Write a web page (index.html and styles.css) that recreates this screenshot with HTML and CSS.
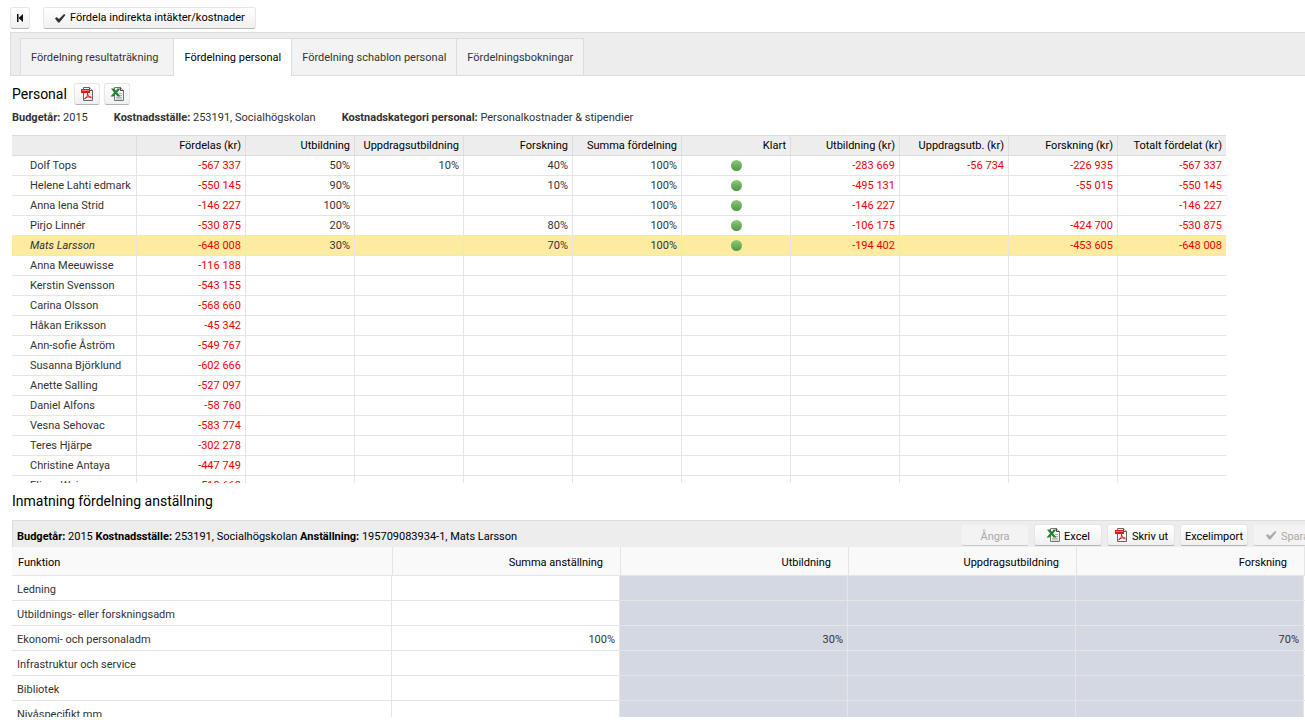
FILE: index.html
```
<!DOCTYPE html>
<html lang="sv">
<head>
<meta charset="utf-8">
<title>Fördelning personal</title>
<link rel="stylesheet" href="styles.css">
</head>
<body>
<svg class="defs" aria-hidden="true">
  <symbol id="pdf" viewBox="0 0 14 14">
    <path d="M3.500.5h6l3 3v10h-9z" fill="#f6f6f6" stroke="#666"/>
    <path d="M9.500.5v3h3" fill="#ddd" stroke="#555"/>
    <path d="M1 2h9v4H1z" fill="#e81515"/>
    <path d="M2 3.500h7" stroke="#f77" fill="none"/>
    <path d="M4.500 12c2-1 3.300-3 3-6M7.500 6.500c.5 2.500 2 4 4 4.500M4.500 11.500c2-1.500 4-2 7-1.500" stroke="#e01818" fill="none"/>
  </symbol>
  <symbol id="xls" viewBox="0 0 14 14">
    <path d="M4.500.5h6l3 3v10h-9z" fill="#f4f4f4" stroke="#777"/>
    <path d="M10.500.5v3h3" fill="#ddd" stroke="#444"/>
    <path d="M9 6.500h3M9 8.500h3M6 10.500h6M6 12h6" stroke="#a9b8a9" fill="none"/>
    <path d="M1 1.500h3l2 2.300 1.500-2.300h3L7.200 5.500l3.300 4h-3L5.500 7 3.500 9.500h-3L4 5.500z" fill="#27802f"/>
  </symbol>
  <symbol id="check" viewBox="0 0 12 12">
    <path d="M1 6.500l1.500-1.500 2.500 2 5-5 1.500 1L5.500 10.500H4z" fill="currentColor"/>
  </symbol>
</svg>

<header class="toolbar">
  <button class="btn" aria-label="Till början"><svg width="8" height="8" viewBox="0 0 8 8"><path d="M1 0h1.500v8H1zM7 0v8L2.500 4z" fill="#111"/></svg></button>
  <button class="btn wide"><svg width="12" height="12" class="dark"><use href="#check"/></svg>Fördela indirekta intäkter/kostnader</button>
</header>

<nav class="tabs">
  <a class="tab" href="#resultat">Fördelning resultaträkning</a>
  <a class="tab active" href="#personal" aria-current="page">Fördelning personal</a>
  <a class="tab" href="#schablon">Fördelning schablon personal</a>
  <a class="tab" href="#bokningar">Fördelningsbokningar</a>
</nav>

<main class="content">
  <div class="heading">
    <h1>Personal</h1>
    <button class="btn" aria-label="PDF"><svg width="14" height="14"><use href="#pdf"/></svg></button>
    <button class="btn" aria-label="Excel"><svg width="14" height="14"><use href="#xls"/></svg></button>
  </div>
  <div class="facts">
    <span><b>Budgetår:</b> 2015</span>
    <span><b>Kostnadsställe:</b> 253191, Socialhögskolan</span>
    <span><b>Kostnadskategori personal:</b> Personalkostnader &amp; stipendier</span>
  </div>

  <div class="staff-scroll">
    <table class="staff">
      <colgroup><col class="name-col"><col span="9" class="amount-col"><col></colgroup>
      <thead>
        <tr><th></th><th>Fördelas (kr)</th><th>Utbildning</th><th>Uppdragsutbildning</th><th>Forskning</th><th>Summa fördelning</th><th>Klart</th><th>Utbildning (kr)</th><th>Uppdragsutb. (kr)</th><th>Forskning (kr)</th><th>Totalt fördelat (kr)</th></tr>
      </thead>
      <tbody>
        <tr><td>Dolf Tops</td><td class="neg">-567 337</td><td>50%</td><td>10%</td><td>40%</td><td>100%</td><td class="done"><i class="dot"></i></td><td class="neg">-283 669</td><td class="neg">-56 734</td><td class="neg">-226 935</td><td class="neg">-567 337</td></tr>
        <tr><td>Helene Lahti edmark</td><td class="neg">-550 145</td><td>90%</td><td></td><td>10%</td><td>100%</td><td class="done"><i class="dot"></i></td><td class="neg">-495 131</td><td></td><td class="neg">-55 015</td><td class="neg">-550 145</td></tr>
        <tr><td>Anna lena Strid</td><td class="neg">-146 227</td><td>100%</td><td></td><td></td><td>100%</td><td class="done"><i class="dot"></i></td><td class="neg">-146 227</td><td></td><td></td><td class="neg">-146 227</td></tr>
        <tr><td>Pirjo Linnér</td><td class="neg">-530 875</td><td>20%</td><td></td><td>80%</td><td>100%</td><td class="done"><i class="dot"></i></td><td class="neg">-106 175</td><td></td><td class="neg">-424 700</td><td class="neg">-530 875</td></tr>
        <tr class="selected"><td>Mats Larsson</td><td class="neg">-648 008</td><td>30%</td><td></td><td>70%</td><td>100%</td><td class="done"><i class="dot"></i></td><td class="neg">-194 402</td><td></td><td class="neg">-453 605</td><td class="neg">-648 008</td></tr>
        <tr><td>Anna Meeuwisse</td><td class="neg">-116 188</td><td></td><td></td><td></td><td></td><td></td><td></td><td></td><td></td><td></td></tr>
        <tr><td>Kerstin Svensson</td><td class="neg">-543 155</td><td></td><td></td><td></td><td></td><td></td><td></td><td></td><td></td><td></td></tr>
        <tr><td>Carina Olsson</td><td class="neg">-568 660</td><td></td><td></td><td></td><td></td><td></td><td></td><td></td><td></td><td></td></tr>
        <tr><td>Håkan Eriksson</td><td class="neg">-45 342</td><td></td><td></td><td></td><td></td><td></td><td></td><td></td><td></td><td></td></tr>
        <tr><td>Ann-sofie Åström</td><td class="neg">-549 767</td><td></td><td></td><td></td><td></td><td></td><td></td><td></td><td></td><td></td></tr>
        <tr><td>Susanna Björklund</td><td class="neg">-602 666</td><td></td><td></td><td></td><td></td><td></td><td></td><td></td><td></td><td></td></tr>
        <tr><td>Anette Salling</td><td class="neg">-527 097</td><td></td><td></td><td></td><td></td><td></td><td></td><td></td><td></td><td></td></tr>
        <tr><td>Daniel Alfons</td><td class="neg">-58 760</td><td></td><td></td><td></td><td></td><td></td><td></td><td></td><td></td><td></td></tr>
        <tr><td>Vesna Sehovac</td><td class="neg">-583 774</td><td></td><td></td><td></td><td></td><td></td><td></td><td></td><td></td><td></td></tr>
        <tr><td>Teres Hjärpe</td><td class="neg">-302 278</td><td></td><td></td><td></td><td></td><td></td><td></td><td></td><td></td><td></td></tr>
        <tr><td>Christine Antaya</td><td class="neg">-447 749</td><td></td><td></td><td></td><td></td><td></td><td></td><td></td><td></td><td></td></tr>
        <tr><td>Elinor Weiner</td><td class="neg">-518 668</td><td></td><td></td><td></td><td></td><td></td><td></td><td></td><td></td><td></td></tr>
      </tbody>
    </table>
  </div>

  <h2>Inmatning fördelning anställning</h2>

  <section class="entry">
    <div class="entry-bar">
      <div class="entry-info"><b>Budgetår:</b> 2015 <b>Kostnadsställe:</b> 253191, Socialhögskolan <b>Anställning:</b> 195709083934-1, Mats Larsson</div>
      <div class="actions">
        <button class="btn" disabled>Ångra</button>
        <button class="btn"><svg width="14" height="14"><use href="#xls"/></svg>Excel</button>
        <button class="btn"><svg width="14" height="14"><use href="#pdf"/></svg>Skriv ut</button>
        <button class="btn">Excelimport</button>
        <button class="btn" disabled><svg width="12" height="12"><use href="#check"/></svg>Spara</button>
      </div>
    </div>
    <table class="functions">
      <colgroup><col class="function-col"><col span="4" class="value-col"><col></colgroup>
      <thead>
        <tr><th>Funktion</th><th>Summa anställning</th><th>Utbildning</th><th>Uppdragsutbildning</th><th>Forskning</th><th></th></tr>
      </thead>
      <tbody>
        <tr><td>Ledning</td><td></td><td></td><td></td><td></td><td></td></tr>
        <tr><td>Utbildnings- eller forskningsadm</td><td></td><td></td><td></td><td></td><td></td></tr>
        <tr><td>Ekonomi- och personaladm</td><td>100%</td><td>30%</td><td></td><td>70%</td><td></td></tr>
        <tr><td>Infrastruktur och service</td><td></td><td></td><td></td><td></td><td></td></tr>
        <tr><td>Bibliotek</td><td></td><td></td><td></td><td></td><td></td></tr>
        <tr><td>Nivåspecifikt mm</td><td></td><td></td><td></td><td></td><td></td></tr>
      </tbody>
    </table>
  </section>
</main>
</body>
</html>
```
FILE: styles.css
```
* { box-sizing: border-box; }

body {
  display: flex;
  flex-direction: column;
  height: 100vh;
  margin: 0;
  padding: 7px 0 9px 10px;
  overflow: hidden;
  background: #fff;
  color: #333;
  font: 11px/16px "Trebuchet MS", Roboto, "Liberation Sans", sans-serif;
}

.defs { position: absolute; width: 0; height: 0; }

b { font-weight: 700; }

.btn {
  display: inline-flex;
  align-items: center;
  justify-content: center;
  gap: 4px;
  height: 22px;
  padding: 0 5px;
  border: 1px solid #e6e6e6;
  border-bottom-color: #b5b5b5;
  border-radius: 3px;
  background: linear-gradient(#fff, #f0f0f0);
  color: #000;
  font: inherit;
  white-space: nowrap;
}
.btn:disabled {
  border-color: #eee;
  border-bottom-color: #ccc;
  background: #f3f3f3;
  color: #aaa;
}
.dark { color: #333; }

.toolbar { display: flex; gap: 13px; height: 25px; }
.toolbar .wide { padding: 0 10px; }

.tabs {
  display: flex;
  flex: none;
  height: 44px;
  padding: 5px 0 0 9px;
  border: 1px solid #ddd;
  border-right: 0;
  background: #ededed;
}
.tab {
  height: 37px;
  padding: 0 10px;
  border: 1px solid #ddd;
  border-width: 1px 1px 0 0;
  background: #f3f3f3;
  color: #333;
  line-height: 37px;
  text-decoration: none;
}
.tab:first-child { padding-right: 15px; border-left-width: 1px; }
.tab.active { height: 38px; background: #fff; color: #000; }

.content {
  display: flex;
  flex: 1;
  flex-direction: column;
  min-height: 0;
  padding-left: 2px;
}

.heading { display: flex; align-items: center; gap: 4px; padding-top: 7px; }
.heading h1 { margin: 0 3px 0 0; }
h1, h2 { margin: 0; color: #000; font-size: 14px; font-weight: 400; line-height: 20px; }

.facts { display: flex; gap: 26px; padding: 5px 0 9px; }

table { border-collapse: separate; border-spacing: 0; table-layout: fixed; }
th { color: #000; font-weight: 400; text-align: right; }
td { text-align: right; }
th:first-child, td:first-child { text-align: left; }
th, td { overflow: hidden; white-space: nowrap; }

.staff-scroll { flex: 1; min-height: 0; overflow: hidden; }
.staff { width: 1214px; }
.name-col { width: 125px; }
.amount-col { width: 109px; }
.staff th, .staff td {
  height: 20px;
  padding: 0 4px;
  border-right: 1px solid #e5e5e5;
  border-bottom: 1px solid #e5e5e5;
  line-height: 19px;
}
.staff th {
  height: 21px;
  border-color: #ddd;
  border-top: 1px solid #ddd;
  background: #ededed;
}
.staff td:first-child { padding-left: 18px; }
.staff th:last-child, .staff td:last-child { border-right: 0; }
.staff .neg { color: #f00000; }
.staff .done { text-align: center; }
.staff .selected td { background: #ffeb9f; }
.staff .selected td:first-child { font-style: italic; }

.dot {
  display: block;
  width: 11px;
  height: 11px;
  margin: 0 auto;
  border-radius: 50%;
  background: linear-gradient(#8ccb74, #4f9648);
}

h2 { padding: 8px 0 9px; }

.entry { flex: none; height: 197px; overflow: hidden; }
.entry-bar {
  display: flex;
  align-items: center;
  justify-content: space-between;
  min-width: 1311px;
  height: 27px;
  padding: 2px 2px 0 4px;
  border-top: 1px solid #ddd;
  border-left: 1px solid #ddd;
  background: #ededed;
  color: #000;
}
.entry-info { padding-top: 3px; }
.actions { display: flex; gap: 5px; }
.actions .btn { width: 68px; padding: 4px 0 0; }
.actions svg { margin-bottom: 5px; }

.functions { width: 100%; min-width: 1311px; }
.function-col { width: 380px; }
.value-col { width: 228px; }
.functions th {
  height: 29px;
  padding: 3px 17px 0 6px;
  border-bottom: 1px solid #e5e5e5;
  border-left: 1px solid #e5e5e5;
  background: #f9f9f9;
}
.functions th:first-child { border-left: 0; }
.functions td {
  height: 25px;
  padding: 4px 4px 0 5px;
  border-right: 1px solid #e5e5e5;
  border-bottom: 1px solid #e5e5e5;
}
.functions td:nth-child(n+3):nth-child(-n+5) { background: #d4d8e3; }
```
